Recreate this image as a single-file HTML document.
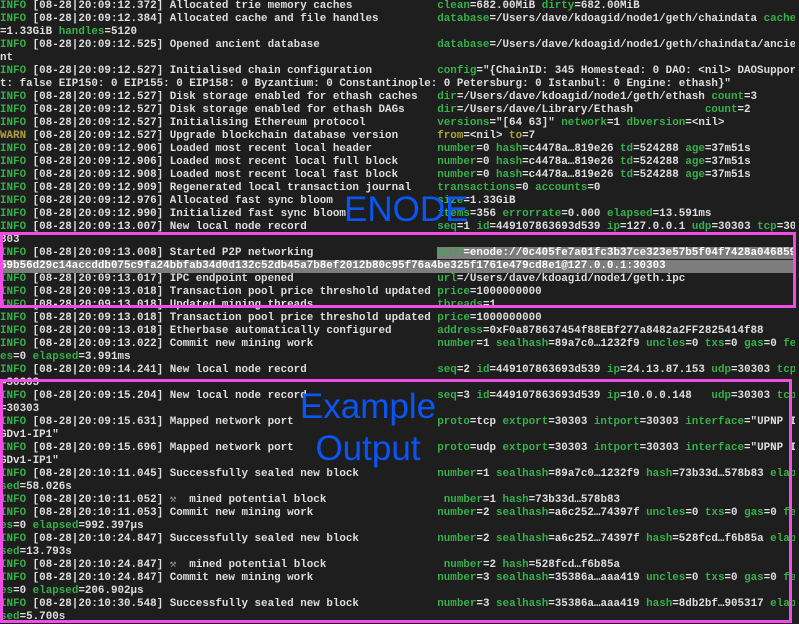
<!DOCTYPE html>
<html><head><meta charset="utf-8"><style>
html,body{margin:0;padding:0;background:#1e1e1e;width:799px;height:623px;overflow:hidden}
#t{position:absolute;left:0;top:0;width:799px;font-family:"Liberation Mono","DejaVu Sans Mono",monospace;font-size:10.88px;line-height:13px;color:#dedede;font-weight:bold}
#t div{height:13px;white-space:pre;overflow:hidden;width:795px}
i{font-style:normal;color:#36b04a}
b{color:#36b04a}
y{color:#b0a23a}
.m{display:inline-block;width:41ch}
.h{background:#7d7d7d;color:#fff}
.hm{color:#9a9a9a}
.box{position:absolute;border:3px solid #f24ce6;box-sizing:border-box}
.lbl{position:absolute;font-family:"Liberation Sans",Arial,sans-serif;color:#0a55f5}
</style></head><body>
<div id="t">
<div><i>INFO</i> [08-28|20:09:12.372] <span class="m">Allocated trie memory caches</span><b>clean</b>=682.00MiB <b>dirty</b>=682.00MiB</div>
<div><i>INFO</i> [08-28|20:09:12.384] <span class="m">Allocated cache and file handles</span><b>database</b>=/Users/dave/kdoagid/node1/geth/chaindata <b>cache</b></div>
<div>=1.33GiB <b>handles</b>=5120</div>
<div><i>INFO</i> [08-28|20:09:12.525] <span class="m">Opened ancient database</span><b>database</b>=/Users/dave/kdoagid/node1/geth/chaindata/ancie</div>
<div>nt</div>
<div><i>INFO</i> [08-28|20:09:12.527] <span class="m">Initialised chain configuration</span><b>config</b>="{ChainID: 345 Homestead: 0 DAO: &lt;nil&gt; DAOSuppor</div>
<div>t: false EIP150: 0 EIP155: 0 EIP158: 0 Byzantium: 0 Constantinople: 0 Petersburg: 0 Istanbul: 0 Engine: ethash}"</div>
<div><i>INFO</i> [08-28|20:09:12.527] <span class="m">Disk storage enabled for ethash caches</span><b>dir</b>=/Users/dave/kdoagid/node1/geth/ethash <b>count</b>=3</div>
<div><i>INFO</i> [08-28|20:09:12.527] <span class="m">Disk storage enabled for ethash DAGs</span><b>dir</b>=/Users/dave/Library/Ethash           <b>count</b>=2</div>
<div><i>INFO</i> [08-28|20:09:12.527] <span class="m">Initialising Ethereum protocol</span><b>versions</b>="[64 63]" <b>network</b>=1 <b>dbversion</b>=&lt;nil&gt;</div>
<div><y>WARN</y> [08-28|20:09:12.527] <span class="m">Upgrade blockchain database version</span><y>from</y>=&lt;nil&gt; <y>to</y>=7</div>
<div><i>INFO</i> [08-28|20:09:12.906] <span class="m">Loaded most recent local header</span><b>number</b>=0 <b>hash</b>=c4478a…819e26 <b>td</b>=524288 <b>age</b>=37m51s</div>
<div><i>INFO</i> [08-28|20:09:12.906] <span class="m">Loaded most recent local full block</span><b>number</b>=0 <b>hash</b>=c4478a…819e26 <b>td</b>=524288 <b>age</b>=37m51s</div>
<div><i>INFO</i> [08-28|20:09:12.908] <span class="m">Loaded most recent local fast block</span><b>number</b>=0 <b>hash</b>=c4478a…819e26 <b>td</b>=524288 <b>age</b>=37m51s</div>
<div><i>INFO</i> [08-28|20:09:12.909] <span class="m">Regenerated local transaction journal</span><b>transactions</b>=0 <b>accounts</b>=0</div>
<div><i>INFO</i> [08-28|20:09:12.976] <span class="m">Allocated fast sync bloom</span><b>size</b>=1.33GiB</div>
<div><i>INFO</i> [08-28|20:09:12.990] <span class="m">Initialized fast sync bloom</span><b>items</b>=356 <b>errorrate</b>=0.000 <b>elapsed</b>=13.591ms</div>
<div><i>INFO</i> [08-28|20:09:13.007] <span class="m">New local node record</span><b>seq</b>=1 <b>id</b>=449107863693d539 <b>ip</b>=127.0.0.1 <b>udp</b>=30303 <b>tcp</b>=30</div>
<div>303</div>
<div><i>INFO</i> [08-28|20:09:13.008] <span class="m">Started P2P networking</span><span class="h"><b>self</b>=enode://0c405fe7a01fc3b37ce323e57b5f04f7428a046859          </span></div>
<div class="h">59b56d29c14accddb075c9fa24bbfab34d0d132c52db45a7b8ef2012b80c95f76a4be325f1761e479cd8e1@127.0.0.1:30303                    </div>
<div><i>INFO</i> [08-28|20:09:13.017] <span class="m">IPC endpoint opened</span><b>url</b>=/Users/dave/kdoagid/node1/geth.ipc</div>
<div><i>INFO</i> [08-28|20:09:13.018] <span class="m">Transaction pool price threshold updated</span><b>price</b>=1000000000</div>
<div><i>INFO</i> [08-28|20:09:13.018] <span class="m">Updated mining threads</span><b>threads</b>=1</div>
<div><i>INFO</i> [08-28|20:09:13.018] <span class="m">Transaction pool price threshold updated</span><b>price</b>=1000000000</div>
<div><i>INFO</i> [08-28|20:09:13.018] <span class="m">Etherbase automatically configured</span><b>address</b>=0xF0a878637454f88EBf277a8482a2FF2825414f88</div>
<div><i>INFO</i> [08-28|20:09:13.022] <span class="m">Commit new mining work</span><b>number</b>=1 <b>sealhash</b>=89a7c0…1232f9 <b>uncles</b>=0 <b>txs</b>=0 <b>gas</b>=0 <b>fe</b></div>
<div><b>es</b>=0 <b>elapsed</b>=3.991ms</div>
<div><i>INFO</i> [08-28|20:09:14.241] <span class="m">New local node record</span><b>seq</b>=2 <b>id</b>=449107863693d539 <b>ip</b>=24.13.87.153 <b>udp</b>=30303 <b>tcp</b></div>
<div>=30303</div>
<div><i>INFO</i> [08-28|20:09:15.204] <span class="m">New local node record</span><b>seq</b>=3 <b>id</b>=449107863693d539 <b>ip</b>=10.0.0.148   <b>udp</b>=30303 <b>tcp</b></div>
<div>=30303</div>
<div><i>INFO</i> [08-28|20:09:15.631] <span class="m">Mapped network port</span><b>proto</b>=tcp <b>extport</b>=30303 <b>intport</b>=30303 <b>interface</b>="UPNP I</div>
<div>GDv1-IP1"</div>
<div><i>INFO</i> [08-28|20:09:15.696] <span class="m">Mapped network port</span><b>proto</b>=udp <b>extport</b>=30303 <b>intport</b>=30303 <b>interface</b>="UPNP I</div>
<div>GDv1-IP1"</div>
<div><i>INFO</i> [08-28|20:10:11.045] <span class="m">Successfully sealed new block</span><b>number</b>=1 <b>sealhash</b>=89a7c0…1232f9 <b>hash</b>=73b33d…578b83 <b>elap</b></div>
<div><b>sed</b>=58.026s</div>
<div><i>INFO</i> [08-28|20:10:11.052] <span class="m"><span class="hm">⚒</span>  mined potential block</span> <b>number</b>=1 <b>hash</b>=73b33d…578b83</div>
<div><i>INFO</i> [08-28|20:10:11.053] <span class="m">Commit new mining work</span><b>number</b>=2 <b>sealhash</b>=a6c252…74397f <b>uncles</b>=0 <b>txs</b>=0 <b>gas</b>=0 <b>fe</b></div>
<div><b>es</b>=0 <b>elapsed</b>=992.397µs</div>
<div><i>INFO</i> [08-28|20:10:24.847] <span class="m">Successfully sealed new block</span><b>number</b>=2 <b>sealhash</b>=a6c252…74397f <b>hash</b>=528fcd…f6b85a <b>elap</b></div>
<div><b>sed</b>=13.793s</div>
<div><i>INFO</i> [08-28|20:10:24.847] <span class="m"><span class="hm">⚒</span>  mined potential block</span> <b>number</b>=2 <b>hash</b>=528fcd…f6b85a</div>
<div><i>INFO</i> [08-28|20:10:24.847] <span class="m">Commit new mining work</span><b>number</b>=3 <b>sealhash</b>=35386a…aaa419 <b>uncles</b>=0 <b>txs</b>=0 <b>gas</b>=0 <b>fe</b></div>
<div><b>es</b>=0 <b>elapsed</b>=206.902µs</div>
<div><i>INFO</i> [08-28|20:10:30.548] <span class="m">Successfully sealed new block</span><b>number</b>=3 <b>sealhash</b>=35386a…aaa419 <b>hash</b>=8db2bf…905317 <b>elap</b></div>
<div><b>sed</b>=5.700s</div>
</div>
<div class="box" style="left:0;top:232px;width:796px;height:76px"></div>
<div class="box" style="left:0;top:379px;width:792px;height:244px"></div>
<div class="lbl" style="left:344px;top:190px;font-size:35px;line-height:40px">ENODE</div>
<div class="lbl" style="left:298px;top:386px;width:140px;text-align:center;font-size:35px;line-height:42px">Example<br>Output</div>
</body></html>
